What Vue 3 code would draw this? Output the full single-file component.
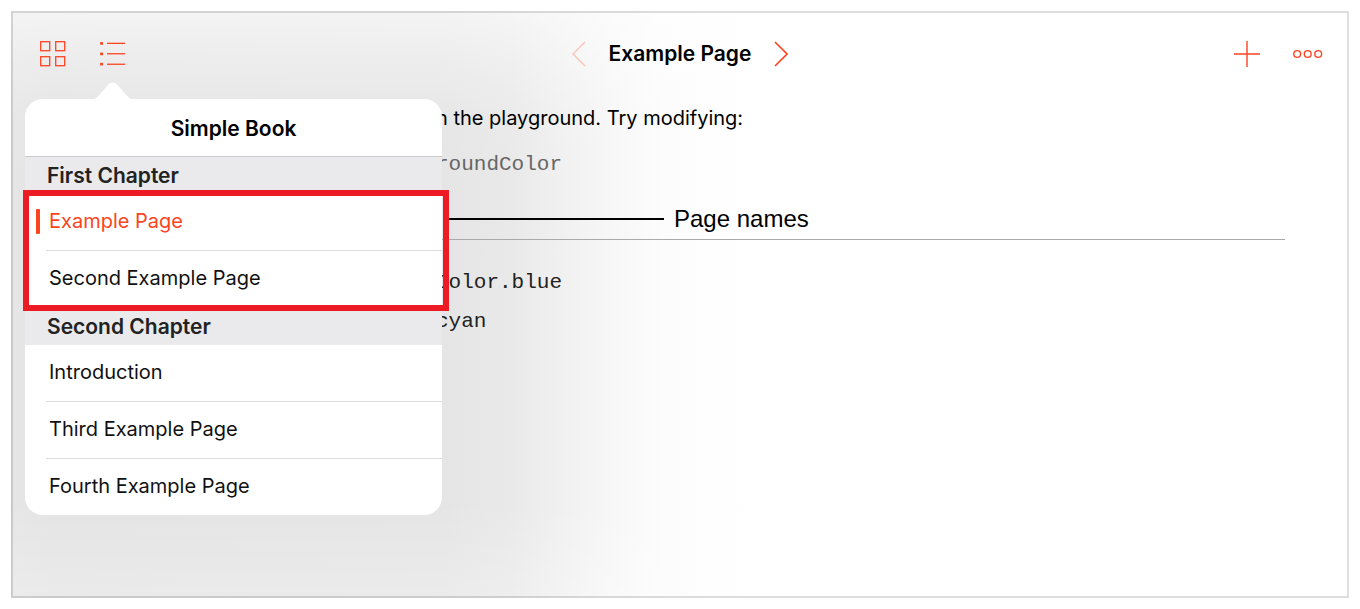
<script setup>
import { ref } from 'vue'

const current = ref('Example Page')
const chapters = [
  { title: 'First Chapter', marked: true, pages: ['Example Page', 'Second Example Page'] },
  { title: 'Second Chapter', marked: false, pages: ['Introduction', 'Third Example Page', 'Fourth Example Page'] },
]
</script>

<template>
  <div class="frame">
    <header class="toolbar">
      <div class="group left">
        <button type="button" aria-label="All playgrounds">
          <svg width="26" height="26" viewBox="0 0 26 26" fill="none" stroke="currentColor" stroke-width="1.3">
            <rect x="0.7" y="0.7" width="9" height="9" />
            <rect x="15.7" y="0.7" width="9" height="9" />
            <rect x="0.7" y="15.7" width="9" height="9" />
            <rect x="15.7" y="15.7" width="9" height="9" />
          </svg>
        </button>
        <div class="contents">
          <button type="button" aria-label="Table of contents" aria-expanded="true">
            <svg width="26" height="26" viewBox="0 0 26 26" fill="currentColor">
              <rect x="0.2" y="1" width="2.8" height="2.8" rx="0.5" />
              <rect x="0.2" y="11.4" width="2.8" height="2.8" rx="0.5" />
              <rect x="0.2" y="21.8" width="2.8" height="2.8" rx="0.5" />
              <rect x="7" y="1.7" width="18.2" height="1.3" />
              <rect x="7" y="12.1" width="18.2" height="1.3" />
              <rect x="7" y="22.6" width="18.2" height="1.3" />
            </svg>
          </button>
          <nav class="popover" aria-label="Simple Book">
            <svg class="arrow" width="42" height="18" viewBox="0 0 42 18" fill="#fff">
              <path d="M0 17.5C4 17.3 6.500 14 9 11L16 3C19 -0.2 22.500 -0.2 25.500 3L32.500 11C35 14 37.500 17.300 42 17.500V18H0Z" />
            </svg>
            <h2>Simple Book</h2>
            <section v-for="c in chapters" :key="c.title">
              <h3>{{ c.title }}</h3>
              <div class="pages">
                <ul>
                  <li v-for="p in c.pages" :key="p">
                    <button type="button" :class="{ active: c.marked && p === current }">{{ p }}</button>
                  </li>
                </ul>
                <div v-if="c.marked" class="highlight"></div>
                <div v-if="c.marked" class="callout"><i></i><span>Page names</span></div>
              </div>
            </section>
          </nav>
        </div>
      </div>
      <div class="group title">
        <button type="button" aria-label="Previous page" disabled>
          <svg width="14" height="26" viewBox="0 0 14 26" fill="none" stroke="currentColor" stroke-width="1.4">
            <path d="M13 1L1 13L13 25" />
          </svg>
        </button>
        <h1>Example Page</h1>
        <button type="button" aria-label="Next page">
          <svg width="14" height="26" viewBox="0 0 14 26" fill="none" stroke="currentColor" stroke-width="1.6">
            <path d="M1 1L13 13L1 25" />
          </svg>
        </button>
      </div>
      <div class="group right">
        <button type="button" aria-label="Add">
          <svg width="26" height="26" viewBox="0 0 26 26" fill="none" stroke="currentColor" stroke-width="1.4">
            <path d="M13 0V26M0 13H26" />
          </svg>
        </button>
        <button type="button" aria-label="More">
          <svg width="30" height="10" viewBox="0 0 30 10" fill="none" stroke="currentColor" stroke-width="1.4">
            <circle cx="4.200" cy="5" r="3.400" />
            <circle cx="14.700" cy="5" r="3.400" />
            <circle cx="25.200" cy="5" r="3.400" />
          </svg>
        </button>
      </div>
    </header>
    <main>
      <p>n the playground. Try modifying:</p>
      <code class="property">roundColor</code>
      <hr />
      <code>Color.blue</code>
      <code>cyan</code>
    </main>
  </div>
</template>

<style>
body {
  background: #fff;
}
</style>

<style scoped>
.frame {
  box-sizing: border-box;
  min-height: calc(100vh - 22px);
  margin: 11px;
  border: 2px solid rgba(0, 0, 0, 0.13);
  overflow: hidden;
  background:
    linear-gradient(to bottom, rgba(255, 255, 255, 0.58), rgba(255, 255, 255, 0.3) 50px, rgba(255, 255, 255, 0.06) 110px, rgba(255, 255, 255, 0) 180px, rgba(255, 255, 255, 0) 490px, rgba(255, 255, 255, 0.24)),
    linear-gradient(to right, #e6e6e6, #e4e4e4 40px, #e5e5e5 430px, #e9e9e9 500px, #f1f1f1 555px, #f7f7f7 600px, #fcfcfc 650px, #fefefe 700px, #fff 750px);
  background-origin: border-box;
  font-family: Inter, "Liberation Sans", sans-serif;
  font-size: 20px;
  color: #000;
}
.toolbar {
  display: grid;
  grid-template-columns: 1fr auto 1fr;
  align-items: center;
  height: 82px;
  padding: 0 24px;
}
.group {
  display: flex;
  align-items: center;
}
.left {
  gap: 34px;
  padding-left: 3px;
}
.title {
  gap: 23px;
}
.right {
  justify-content: flex-end;
  gap: 33px;
}
button {
  display: block;
  padding: 0;
  border: 0;
  background: none;
  font: inherit;
  color: #fc4421;
}
button:disabled {
  color: #fbc3b8;
}
svg {
  display: block;
}
h1,
h2,
h3,
p,
ul {
  margin: 0;
  padding: 0;
}
h1,
h2 {
  font-size: 21px;
  font-weight: 600;
  line-height: 28px;
}
.contents {
  position: relative;
}
.popover {
  position: absolute;
  top: 58px;
  left: -75px;
  width: 417px;
  border-radius: 18px;
  background: #fff;
}
.arrow {
  position: absolute;
  top: -17px;
  left: 67px;
}
h2 {
  box-sizing: border-box;
  height: 58px;
  padding-top: 16px;
  border-bottom: 1px solid #cbcbcd;
  text-align: center;
}
h3 {
  padding-left: 22px;
  background: #eaeaec;
  font-size: 21px;
  font-weight: 600;
  line-height: 37px;
  color: #222;
}
ul {
  list-style: none;
}
li {
  margin-left: 21px;
  border-bottom: 1px solid #dcdcdc;
}
li:last-child {
  border-bottom-color: transparent;
}
section:last-child li:last-child {
  border-bottom: 0;
}
li button {
  position: relative;
  width: 100%;
  padding: 0 0 1px 3px;
  line-height: 55px;
  text-align: left;
  color: #111;
}
li .active {
  color: #fc4421;
}
.active::before {
  content: "";
  position: absolute;
  left: -10px;
  top: 15px;
  width: 4px;
  height: 25px;
  border-radius: 1px;
  background: #fc4421;
}
.pages {
  position: relative;
}
.highlight {
  position: absolute;
  inset: -4px -7px -3px -2px;
  border: 6px solid #ed1c24;
}
.callout {
  position: absolute;
  top: 10px;
  left: 424px;
  display: flex;
  align-items: center;
  gap: 10px;
  font: 24px/30px "Liberation Sans", Arial, sans-serif;
  white-space: nowrap;
}
.callout i {
  width: 215px;
  height: 2px;
  background: #000;
}
main {
  padding: 8px 62px 0 423px;
}
p {
  line-height: 30px;
}
code {
  display: block;
  margin-top: 9px;
  font: 21px/30px "Liberation Mono", monospace;
  color: #222;
}
.property {
  margin-top: 17px;
  color: #666;
}
hr {
  margin: 59px 0 28px -100px;
  border: 0;
  border-top: 1px solid #aaa;
}
</style>
